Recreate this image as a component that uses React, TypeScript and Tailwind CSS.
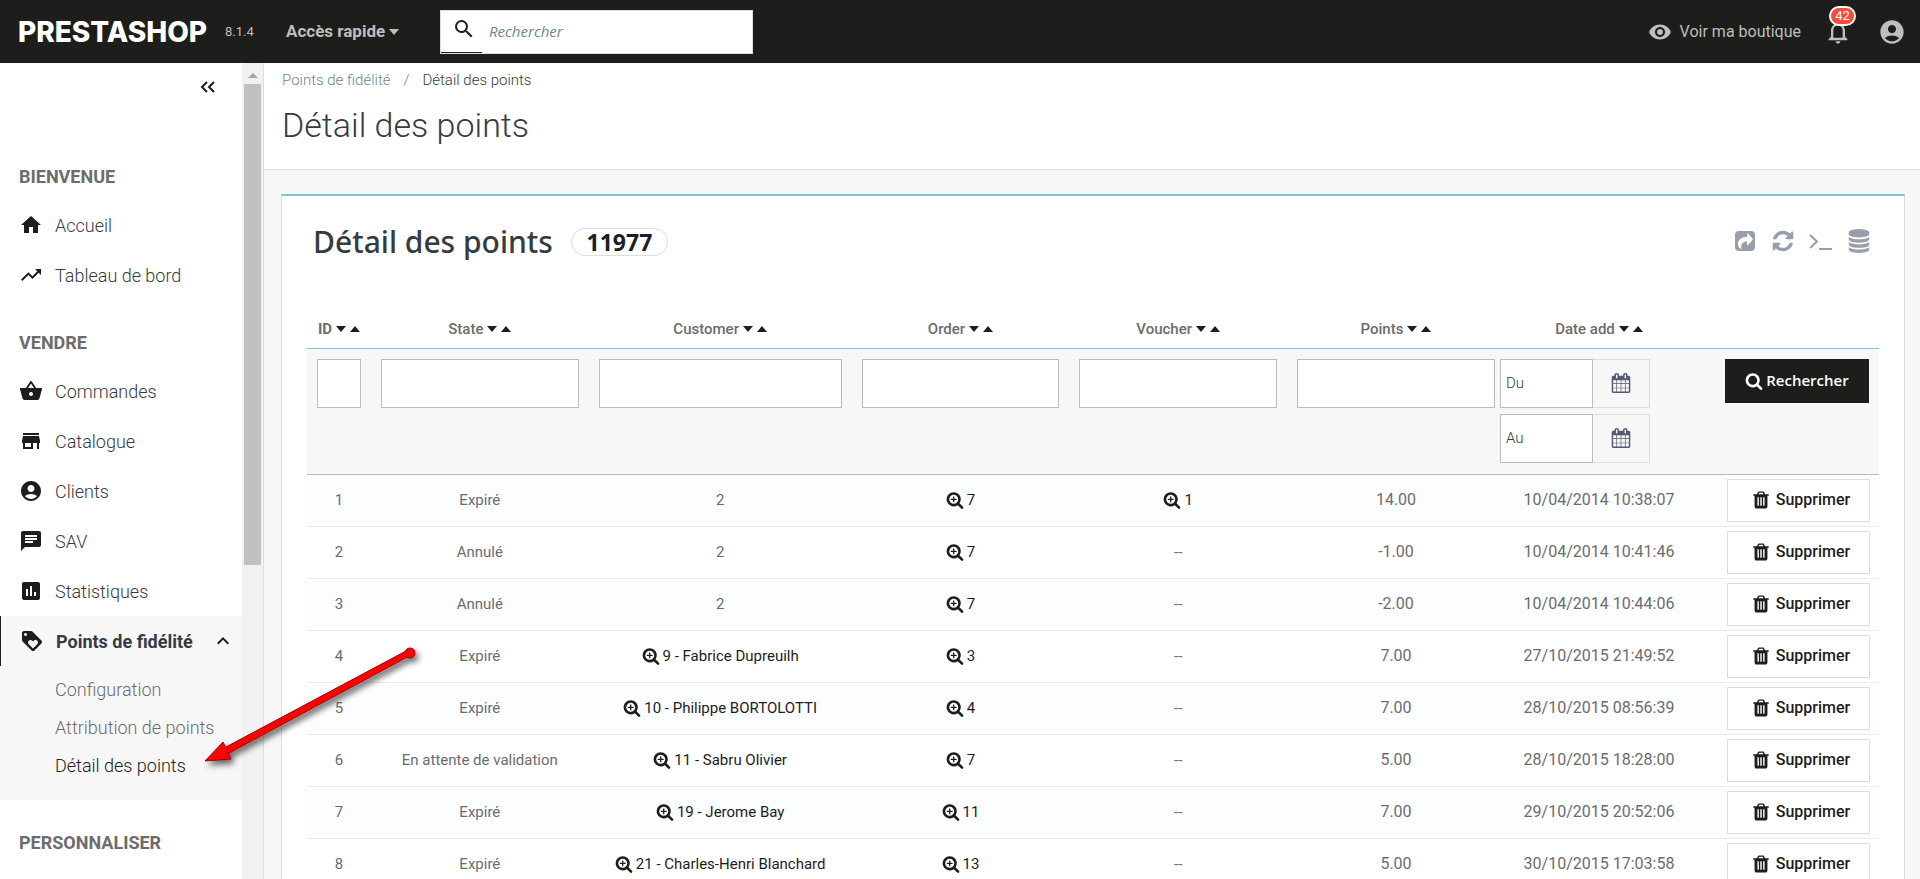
import type { ReactNode } from "react";
import type { IconType } from "react-icons";
import {
  MdAccountCircle,
  MdAssessment,
  MdChat,
  MdHome,
  MdKeyboardArrowUp,
  MdLoyalty,
  MdNotificationsNone,
  MdSearch,
  MdShoppingBasket,
  MdStore,
  MdTrendingUp,
  MdVisibility,
} from "react-icons/md";

type Row = {
  id: number;
  state: string;
  customer: string;
  order: string;
  voucher?: string;
  points: string;
  date: string;
};

const rows: Row[] = [
  { id: 1, state: "Expiré", customer: "2", order: "7", voucher: "1", points: "14.00", date: "10/04/2014 10:38:07" },
  { id: 2, state: "Annulé", customer: "2", order: "7", points: "-1.00", date: "10/04/2014 10:41:46" },
  { id: 3, state: "Annulé", customer: "2", order: "7", points: "-2.00", date: "10/04/2014 10:44:06" },
  { id: 4, state: "Expiré", customer: "9 - Fabrice Dupreuilh", order: "3", points: "7.00", date: "27/10/2015 21:49:52" },
  { id: 5, state: "Expiré", customer: "10 - Philippe BORTOLOTTI", order: "4", points: "7.00", date: "28/10/2015 08:56:39" },
  { id: 6, state: "En attente de validation", customer: "11 - Sabru Olivier", order: "7", points: "5.00", date: "28/10/2015 18:28:00" },
  { id: 7, state: "Expiré", customer: "19 - Jerome Bay", order: "11", points: "7.00", date: "29/10/2015 20:52:06" },
  { id: 8, state: "Expiré", customer: "21 - Charles-Henri Blanchard", order: "13", points: "5.00", date: "30/10/2015 17:03:58" },
];

const columns = ["ID", "State", "Customer", "Order", "Voucher", "Points", "Date add"];

const glyphs = {
  search:
    "M1216 832q0-185-131.5-316.5t-316.5-131.5-316.5 131.5-131.5 316.5 131.5 316.5 316.5 131.5 316.5-131.5 131.5-316.5zm512 832q0 52-38 90t-90 38q-54 0-90-38l-343-342q-179 124-399 124-143 0-273.5-55.5t-225-150-150-225-55.5-273.5 55.5-273.5 150-225 225-150 273.5-55.5 273.5 55.5 225 150 150 225 55.5 273.5q0 220-124 399l343 343q37 37 37 90z",
  trash:
    "M704 1376v-704q0-14-9-23t-23-9h-64q-14 0-23 9t-9 23v704q0 14 9 23t23 9h64q14 0 23-9t9-23zm256 0v-704q0-14-9-23t-23-9h-64q-14 0-23 9t-9 23v704q0 14 9 23t23 9h64q14 0 23-9t9-23zm256 0v-704q0-14-9-23t-23-9h-64q-14 0-23 9t-9 23v704q0 14 9 23t23 9h64q14 0 23-9t9-23zm-544-992h448l-48-117q-7-9-17-11h-317q-10 2-17 11zm928 32v64q0 14-9 23t-23 9h-96v948q0 83-47 143.5t-113 60.5h-832q-66 0-113-58.5t-47-141.5v-952h-96q-14 0-23-9t-9-23v-64q0-14 9-23t23-9h309l70-167q15-37 54-63t79-26h320q40 0 79 26t54 63l70 167h309q14 0 23 9t9 23z",
  calendar:
    "M192 1664h288v-288h-288v288zm352 0h320v-288h-320v288zm-352-352h288v-320h-288v320zm352 0h320v-320h-320v320zm-352-384h288v-288h-288v288zm736 736h320v-288h-320v288zm-384-736h320v-288h-320v288zm768 736h288v-288h-288v288zm-384-352h320v-320h-320v320zm-352-864v-288q0-13-9.5-22.5t-22.5-9.5h-64q-13 0-22.5 9.5t-9.5 22.5v288q0 13 9.5 22.5t22.5 9.5h64q13 0 22.5-9.5t9.5-22.5zm736 864h288v-320h-288v320zm-384-384h320v-288h-320v288zm384 0h288v-288h-288v288zm32-480v-288q0-13-9.5-22.5t-22.5-9.5h-64q-13 0-22.5 9.5t-9.5 22.5v288q0 13 9.5 22.5t22.5 9.5h64q13 0 22.5-9.5t9.5-22.5zm384-64v1280q0 52-38 90t-90 38h-1408q-52 0-90-38t-38-90v-1280q0-52 38-90t90-38h128v-96q0-66 47-113t113-47h64q66 0 113 47t47 113v96h384v-96q0-66 47-113t113-47h64q66 0 113 47t47 113v96h128q52 0 90 38t38 90z",
  database:
    "M896 768q237 0 443-43t325-127v170q0 69-103 128t-280 93.5-385 34.5-385-34.5-280-93.5-103-128v-170q119 84 325 127t443 43zm0 768q237 0 443-43t325-127v170q0 69-103 128t-280 93.5-385 34.5-385-34.5-280-93.5-103-128v-170q119 84 325 127t443 43zm0-384q237 0 443-43t325-127v170q0 69-103 128t-280 93.5-385 34.5-385-34.5-280-93.5-103-128v-170q119 84 325 127t443 43zm0-1152q208 0 385 34.5t280 93.5 103 128v128q0 69-103 128t-280 93.5-385 34.5-385-34.5-280-93.5-103-128v-128q0-69 103-128t280-93.5 385-34.5z",
  refresh:
    "M1639 1056q0 5-1 7-64 268-268 434.5t-478 166.5q-146 0-282.5-55t-243.5-157l-129 129q-19 19-45 19t-45-19-19-45v-448q0-26 19-45t45-19h448q26 0 45 19t19 45-19 45l-137 137q71 66 161 102t187 36q134 0 250-65t186-179q11-17 53-117 8-23 30-23h192q13 0 22.5 9.5t9.5 22.5zm25-800v448q0 26-19 45t-45 19h-448q-26 0-45-19t-19-45 19-45l138-138q-148-137-349-137-134 0-250 65t-186 179q-11 17-53 117-8 23-30 23h-199q-13 0-22.5-9.5t-9.5-22.5v-7q65-268 270-434.5t480-166.5q146 0 284 55.5t245 156.5l130-129q19-19 45-19t45 19 19 45z",
};

function Glyph({ name, className }: { name: keyof typeof glyphs; className: string }) {
  return (
    <svg viewBox="0 0 1792 1792" fill="currentColor" className={`shrink-0 ${className}`} aria-hidden="true">
      <path d={glyphs[name]} />
    </svg>
  );
}

function ZoomIn() {
  return (
    <svg viewBox="0 0 1792 1792" fill="currentColor" className="size-[18px] shrink-0" aria-hidden="true">
      <path d={glyphs.search} />
      <path d="M704 544h128v224h224v128H832v224H704V896H480V768h224z" />
    </svg>
  );
}

function NavHeading({ children }: { children: ReactNode }) {
  return <h2 className="px-[19px] pt-[30px] pb-[10px] text-[18px] leading-[26px] font-bold text-[#6c6c6c]">{children}</h2>;
}

function NavItem({ icon: Icon, label }: { icon: IconType; label: string }) {
  return (
    <a href="#" className="flex h-[50px] items-center gap-3 px-[19px]">
      <Icon className="size-6 text-[#1d1d1b]" />
      <span className="text-[18px] font-light text-[#363a41]">{label}</span>
    </a>
  );
}

function SortArrows({ column }: { column: string }) {
  return (
    <>
      <button aria-label={`${column} décroissant`}>
        <svg viewBox="0 0 10 6" className="h-[6px] w-[10px]" fill="#1d1d1b">
          <path d="M0 0h10L5 6z" />
        </svg>
      </button>
      <button aria-label={`${column} croissant`}>
        <svg viewBox="0 0 10 6" className="h-[6px] w-[10px]" fill="#1d1d1b">
          <path d="M0 6h10L5 0z" />
        </svg>
      </button>
    </>
  );
}

function DetailLink({ children }: { children: ReactNode }) {
  return (
    <a href="#" className="inline-flex items-center gap-[3px] align-middle text-[#1d1d1b]">
      <ZoomIn />
      {children}
    </a>
  );
}

function DateFilter({ label }: { label: string }) {
  return (
    <div className="flex h-[49px] w-[150px]">
      <input
        aria-label={label}
        placeholder={label}
        className="w-[93px] border border-[#bbb] bg-white px-[5px] text-[15px] font-light placeholder:text-[#363a41]"
      />
      <button aria-label={`Calendrier ${label}`} className="flex flex-1 items-center justify-center border border-l-0 border-[#ddd] text-[#515c70]">
        <Glyph name="calendar" className="size-5" />
      </button>
    </div>
  );
}

function TopBar() {
  return (
    <header className="flex h-[63px] shrink-0 items-center bg-[#1d1d1b] text-[#bebebe]">
      <a href="#" className="ml-[18px] w-[207px] font-[Inter,sans-serif] text-[28px] leading-9 font-extrabold text-white">
        PRESTASHOP
      </a>
      <span className="w-[61px] text-[13px]">8.1.4</span>
      <button className="flex w-[154px] items-center gap-1 text-[17px] font-bold">
        Accès rapide
        <svg viewBox="0 0 10 6" className="h-[6px] w-[10px]" fill="currentColor">
          <path d="M0 0h10L5 6z" />
        </svg>
      </button>
      <form className="flex h-11 w-[313px] border border-[#ddd] bg-white">
        <button type="button" aria-label="Lancer la recherche" className="flex w-[41px] items-center justify-center border-b border-[#1d1d1b] pb-1 pl-1 text-[#1d1d1b]">
          <MdSearch className="size-6" />
        </button>
        <input
          aria-label="Rechercher"
          placeholder="Rechercher"
          className="min-w-0 flex-1 px-[7px] font-['Open_Sans',sans-serif] text-[15px] italic placeholder:text-[#6c868e]"
        />
      </form>
      <div className="ml-auto flex items-center pr-[14px]">
        <a href="#" className="mr-[23px] flex items-center gap-2 text-[16px]">
          <MdVisibility className="size-6" />
          Voir ma boutique
        </a>
        <button aria-label="Notifications" className="relative mr-[26px]">
          <MdNotificationsNone className="size-7" />
          <span className="absolute -top-[12px] left-[5px] flex h-5 w-[27px] items-center justify-center rounded-full border-2 border-white bg-[#f54c3e] text-[13px] text-white">
            42
          </span>
        </button>
        <button aria-label="Compte">
          <MdAccountCircle className="size-7" />
        </button>
      </div>
    </header>
  );
}

function Sidebar() {
  return (
    <div className="flex w-[264px] shrink-0 border-r border-[#ddd] bg-white">
      <nav className="w-[242px] shrink-0 overflow-hidden">
        <div className="flex h-[71px] justify-end pt-3 pr-[26px]">
          <button aria-label="Réduire le menu" className="flex h-6 items-center text-[#1d1d1b]">
            <svg viewBox="0 0 16 12" className="h-3 w-4" fill="none" stroke="currentColor" strokeWidth="2">
              <path d="M7 1L2 6l5 5M14 1L9 6l5 5" />
            </svg>
          </button>
        </div>
        <NavHeading>BIENVENUE</NavHeading>
        <NavItem icon={MdHome} label="Accueil" />
        <NavItem icon={MdTrendingUp} label="Tableau de bord" />
        <NavHeading>VENDRE</NavHeading>
        <NavItem icon={MdShoppingBasket} label="Commandes" />
        <NavItem icon={MdStore} label="Catalogue" />
        <NavItem icon={MdAccountCircle} label="Clients" />
        <NavItem icon={MdChat} label="SAV" />
        <NavItem icon={MdAssessment} label="Statistiques" />
        <div className="bg-[#f7f7f7] pb-[15px]">
          <a href="#" className="flex h-[50px] items-center gap-3 border-l border-[#1d1d1b] pr-[7px] pl-[19px]">
            <MdLoyalty className="size-6 text-[#1d1d1b]" />
            <span className="flex-1 text-[18px] font-bold whitespace-nowrap text-[#363a41]">Points de fidélité</span>
            <MdKeyboardArrowUp className="size-6 text-[#1d1d1b]" />
          </a>
          <ul className="pt-[5px] pl-[55px] text-[18px] leading-[38px] font-light whitespace-nowrap text-[#6c6c6c]">
            <li><a href="#">Configuration</a></li>
            <li><a href="#">Attribution de points</a></li>
            <li><a href="#" className="text-[#1d1d1b]">Détail des points</a></li>
          </ul>
        </div>
        <NavHeading>PERSONNALISER</NavHeading>
      </nav>
      {/* scroll track */}
      <div className="flex flex-1 flex-col items-center bg-[#f1f1f1]">
        <div className="flex h-[21px] items-center pt-1">
          <svg viewBox="0 0 10 5" className="h-[5px] w-[10px]" fill="#a3a3a3">
            <path d="M0 5h10L5 0z" />
          </svg>
        </div>
        <div className="h-[59%] w-[17px] bg-[#c1c1c1]" />
      </div>
    </div>
  );
}

function PointsTable() {
  const filterInput = "block h-[49px] w-full border border-[#bbb] bg-white px-2";

  return (
    <table className="w-full table-fixed border-collapse text-center text-[15px] text-[#6c6c6c]">
      <colgroup>
        <col className="w-16" />
        <col />
        <col className="w-[263px]" />
        <col />
        <col />
        <col className="w-[213px]" />
        <col className="w-[198px]" />
        <col className="w-[181px]" />
      </colgroup>
      <thead>
        <tr className="h-[43px] border-b border-[#72c7d9]">
          {columns.map((column) => (
            <th key={column} className={`pt-[6px] ${column === "ID" ? "font-bold" : "font-medium"} ${column === "Points" ? "pl-[5px]" : ""}`}>
              <span className="inline-flex items-center gap-1 whitespace-nowrap">
                {column}
                <SortArrows column={column} />
              </span>
            </th>
          ))}
          <th />
        </tr>
        <tr className="h-[126px] border-b border-[#bbb] bg-[#f7f7f7] align-top">
          {columns.slice(0, 5).map((column) => (
            <td key={column} className="px-[10px] pt-[10px]">
              <input aria-label={column} className={filterInput} />
            </td>
          ))}
          <td className="pt-[10px] pr-[5px] pl-[10px]">
            <input aria-label="Points" className={filterInput} />
          </td>
          <td className="pt-[10px]">
            <div className="flex flex-col gap-[6px]">
              <DateFilter label="Du" />
              <DateFilter label="Au" />
            </div>
          </td>
          <td className="pt-[10px] pr-[10px]">
            <button className="ml-auto flex h-11 w-36 items-center justify-center gap-[3px] bg-[#1d1d1b] font-['Open_Sans',sans-serif] text-[15px] font-semibold text-white">
              <Glyph name="search" className="size-[18px]" />
              Rechercher
            </button>
          </td>
        </tr>
      </thead>
      <tbody>
        {rows.map((row) => (
          <tr key={row.id} className="h-[52px] border-b border-[#eaedef] odd:bg-[#fcfdff]">
            <td>{row.id}</td>
            <td>{row.state}</td>
            <td>{row.customer.includes(" - ") ? <DetailLink>{row.customer}</DetailLink> : row.customer}</td>
            <td>
              <DetailLink>{row.order}</DetailLink>
            </td>
            <td>{row.voucher ? <DetailLink>{row.voucher}</DetailLink> : "--"}</td>
            <td className="pl-[5px] text-[16px]">{row.points}</td>
            <td className="text-[16px]">{row.date}</td>
            <td className="pr-[9px]">
              <button className="ml-auto flex h-[43px] w-[143px] items-center justify-center gap-[5px] border border-[#ddd] bg-white pl-1 text-[16px] font-medium text-[#1d1d1b]">
                <Glyph name="trash" className="size-5" />
                Supprimer
              </button>
            </td>
          </tr>
        ))}
      </tbody>
    </table>
  );
}

// Red pointer laid over the page, aimed at the current submenu entry
function Pointer() {
  return (
    <svg viewBox="0 0 230 140" className="pointer-events-none absolute top-[640px] left-[200px] h-[140px] w-[230px] drop-shadow-[3px_4px_3px_rgba(0,0,0,0.6)]">
      <g fill="#f00" stroke="#a00000" strokeWidth="1">
        <path d="M26 107L206 11L211 15L29 113z" />
        <circle cx="210" cy="13" r="5" />
        <path d="M5 121L23 102L31 119z" />
      </g>
      <path d="M27 110L208 13" stroke="#f00" strokeWidth="4" />
    </svg>
  );
}

export default function App() {
  return (
    <div className="relative flex h-screen flex-col overflow-hidden bg-[#f7f7f7] font-[Roboto,sans-serif]">
      <TopBar />
      <div className="flex min-h-0 flex-1">
        <Sidebar />
        <main className="min-w-0 flex-1 overflow-hidden">
          <div className="h-[107px] border-b border-[#ddd] bg-white px-[18px] pt-[6px]">
            <nav aria-label="Fil d'Ariane" className="flex text-[15px] leading-[22px] font-light">
              <a href="#" className="text-[#6c868e]">Points de fidélité</a>
              <span className="px-[13px] text-[#4a9b4f]">/</span>
              <span className="text-[#363a41]">Détail des points</span>
            </nav>
            <h1 className="pt-3 text-[34px] leading-[44px] font-light text-[#363a41]">Détail des points</h1>
          </div>
          <section className="mt-6 mr-[15px] ml-[17px] border-x border-t-2 border-x-[#ddd] border-t-[#77c5d8] bg-white px-[25px]">
            <div className="flex h-[109px] items-start justify-between pt-[26px] pr-2 pl-[6px]">
              <div className="flex h-10 items-center">
                <h2 className="font-['Noto_Sans',sans-serif] text-[30px] leading-10 font-medium text-[#363a41]">Détail des points</h2>
                <span className="ml-[18px] flex h-7 w-[97px] items-center justify-center rounded-full border border-[#ddd] font-['Noto_Sans',sans-serif] text-[23px] font-bold text-[#1a1d2a]">
                  11977
                </span>
              </div>
              <div className="flex h-[38px] items-center gap-[14px] text-[#979faa]">
                <button aria-label="Exporter">
                  <svg viewBox="0 0 20 20" className="size-6 p-[2px]" fill="currentColor" fillRule="evenodd">
                    <path d="M4 0h12a4 4 0 0 1 4 4v12a4 4 0 0 1-4 4H4a4 4 0 0 1-4-4V4a4 4 0 0 1 4-4zM12 3v3C6 6 3 9 3 13c0 2 1 4 3 5 .5 0 .5-.5.3-1C5.500 13 8 10.500 12 10.500v3c0 .6.600.8 1 .4l4.500-5c.4-.4.4-.9 0-1.300l-4.500-5C12.600 2.200 12 2.400 12 3z" />
                  </svg>
                </button>
                <button aria-label="Rafraîchir">
                  <Glyph name="refresh" className="size-6" />
                </button>
                <button aria-label="Requête SQL">
                  <svg viewBox="0 0 24 24" className="size-6" fill="none" stroke="currentColor" strokeWidth="2">
                    <path d="M1 6l7 6.500L1 19M10 20h13" />
                  </svg>
                </button>
                <button aria-label="Gestionnaire SQL">
                  <Glyph name="database" className="size-6" />
                </button>
              </div>
            </div>
            <PointsTable />
          </section>
        </main>
      </div>
      <Pointer />
    </div>
  );
}
